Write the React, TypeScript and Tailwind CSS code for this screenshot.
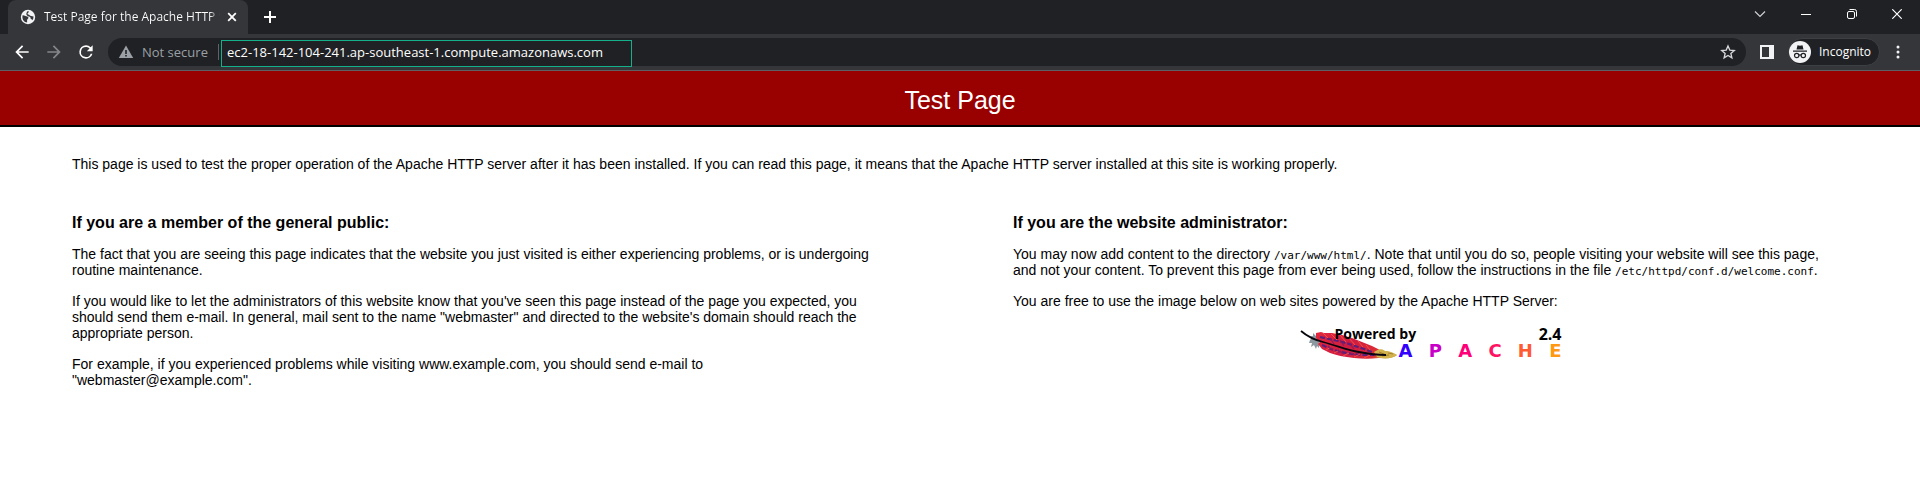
import React from "react";

const chromeFont = "font-['Open_Sans',sans-serif]";

function Globe() {
  return (
    <svg viewBox="0 0 16 16" className="size-4 shrink-0" aria-hidden="true">
      <circle cx="8" cy="8" r="7.2" fill="#f1f3f4" />
      <path d="M2.600 6.200c1.800-.2 2.600.8 3.600 1.100 1.400.3 2.300.7 2.200 1.800-.1.900-1.300 1.100-1.300 2.100v2.300C4.400 13.300 2.400 10.900 2.400 8c0-.6.100-1.200.2-1.800zM8.800 2.400c.2 1.300-1.300 1.300-1.300 2.300 0 1 1.500.6 2.100 1.500.6 1 2.300.9 3.900 1.200.1 1.500-.4 2.900-1.300 3.900-.5-.6-.5-1.400-1.500-1.500-.5-1.100 0-1.700-1-2C8.400 7.500 7 6.900 6.500 5.800 6 4.800 6.800 3.400 7.200 2.500c.5-.1 1.100-.2 1.600-.1z" fill="#35363a" />
    </svg>
  );
}

function Feather() {
  return (
    <svg viewBox="0 0 98 34" className="h-[34px] w-[98px] shrink-0" aria-hidden="true">
      <defs>
        <linearGradient id="plume" x1="0" y1="0" x2="1" y2="0.2">
          <stop offset="0" stopColor="#e0283c" />
          <stop offset="0.5" stopColor="#cf1c42" />
          <stop offset="0.85" stopColor="#dc2c34" />
          <stop offset="1" stopColor="#c9a13b" />
        </linearGradient>
      </defs>
      <path d="M10 14l2-2-2-2 3 0 0-3 3 3 2-3 2 6-1 9-2-2-1 3-2-4-3 2 1-4-3 0z" fill="#8b98a0" />
      <path d="M16 7l5-1 3 1 8 0 10 2 10 3 10 4 10 4 8 4 9 2 8 3c-4 3-9 4-18 3-8 1-16 1-25 0-10-1-18-3-24-5l-8-4-4-5 2-2-4-4z" fill="url(#plume)" />
      <path d="M20 11l9 2 9 2 8 2 9 3 9 3 8 3M22 19l9 4 10 3 11 2 12 1 11 0" fill="none" stroke="#5b1f7c" strokeWidth="2.200" strokeDasharray="5 2" />
      <path d="M23 7l5 5M31 8l6 6M40 9l6 7M49 12l6 7M58 15l5 6M66 19l4 5M26 24l5-3M34 27l6-3M43 30l6-3M54 31l6-3M64 32l6-3" stroke="#f4504a" strokeWidth="1" />
      <path d="M30 12l4 6M40 14l4 6M50 18l4 5M28 20l5 4M38 24l6 4M50 27l6 2" stroke="#8f1b5a" strokeWidth="1.200" />
      <path d="M74 26c4-3 8-4 11-1 5 0 9 2 12 4-5 4-13 4-20 2z" fill="#d2b24c" />
      <path d="M79 26l5 2M82 30l7-1M88 27l5 1" stroke="#94752a" strokeWidth="0.800" />
      <path d="M1 5c7 6 14 9 22 11 15 4 24 8 36 10 10 2 18 3 27 3" fill="none" stroke="#08060c" strokeWidth="1.800" />
    </svg>
  );
}

function ApacheBadge() {
  return (
    <div className="relative mx-auto mt-0.5 flex h-[34px] w-[262px] font-['Open_Sans',sans-serif] text-black">
      <Feather />
      <div className="flex grow items-end justify-between pl-px font-['DejaVu_Sans',sans-serif] text-[18px] leading-[18px] font-bold">
        <span className="text-[#3300ff]">A</span>
        <span className="text-[#c800c8]">P</span>
        <span className="text-[#ff0078]">A</span>
        <span className="text-[#ff1464]">C</span>
        <span className="text-[#ff5a32]">H</span>
        <span className="text-[#ff9914]">E</span>
      </div>
      <div className="absolute inset-x-0 top-0 flex justify-between pl-[35px] text-[14px] leading-4 font-bold">
        <span>Powered by</span>
        <span className="text-[16px]">2.4</span>
      </div>
    </div>
  );
}

function TabStrip() {
  return (
    <div className="flex h-[34px] items-stretch bg-[#202124] pl-2 text-white">
      <div className="flex w-60 items-center rounded-t-lg bg-[#35363a] pr-2 pl-3">
        <Globe />
        <span className="ml-2 w-[176px] overflow-hidden bg-linear-to-r from-white from-94% to-transparent bg-clip-text text-[12px] whitespace-nowrap text-transparent">
          Test Page for the Apache HTTP Server
        </span>
        <button aria-label="Close tab" className="ml-1 flex size-4 items-center justify-center">
          <svg viewBox="0 0 16 16" className="size-4" stroke="#fff" strokeWidth="1.800" aria-hidden="true">
            <path d="M4.200 4.200l7.600 7.600M11.800 4.200l-7.600 7.600" />
          </svg>
        </button>
      </div>
      <button aria-label="New tab" className="ml-3 flex w-5 items-center justify-center">
        <svg viewBox="0 0 14 14" className="size-3.5" stroke="#fff" strokeWidth="2" aria-hidden="true">
          <path d="M7 1v12M1 7h12" />
        </svg>
      </button>
      <div className="ml-auto flex h-7 w-46">
        <button aria-label="Search tabs" className="flex grow items-center justify-center">
          <svg viewBox="0 0 12 12" className="size-3" fill="none" stroke="#d0d0d2" strokeWidth="1.200" aria-hidden="true">
            <path d="M1 3.500l5 5 5-5" />
          </svg>
        </button>
        <button aria-label="Minimize" className="flex grow items-center justify-center">
          <svg viewBox="0 0 10 10" className="size-2.5" stroke="#fff" aria-hidden="true">
            <path d="M0 5.500h10" />
          </svg>
        </button>
        <button aria-label="Restore" className="flex grow items-center justify-center">
          <svg viewBox="0 0 10 10" className="size-2.5" fill="none" stroke="#fff" aria-hidden="true">
            <rect x=".5" y="2.500" width="7" height="7" rx="1.500" />
            <path d="M2.500.5h5a2 2 0 0 1 2 2v5" />
          </svg>
        </button>
        <button aria-label="Close window" className="flex grow items-center justify-center">
          <svg viewBox="0 0 10 10" className="size-2.5" stroke="#fff" strokeWidth="1.200" aria-hidden="true">
            <path d="M.3.3l9.400 9.400M9.700.3L.3 9.700" />
          </svg>
        </button>
      </div>
    </div>
  );
}

function Toolbar() {
  return (
    <div className="flex h-[37px] items-center border-b border-[#5f6063] bg-[#35363a] pl-3 text-white">
      <button aria-label="Back" className="flex size-5 items-center justify-center">
        <svg viewBox="0 0 24 24" className="size-5" fill="#fff" aria-hidden="true">
          <path d="M20 11H7.830l5.590-5.590L12 4l-8 8 8 8 1.410-1.410L7.830 13H20v-2z" />
        </svg>
      </button>
      <button aria-label="Forward" className="ml-3 flex size-5 items-center justify-center">
        <svg viewBox="0 0 24 24" className="size-5" fill="#85868a" aria-hidden="true">
          <path d="M12 4l-1.410 1.410L16.170 11H4v2h12.170l-5.580 5.590L12 20l8-8z" />
        </svg>
      </button>
      <button aria-label="Reload" className="ml-3 flex size-5 items-center justify-center">
        <svg viewBox="0 0 24 24" className="size-5" fill="#fff" aria-hidden="true">
          <path d="M17.650 6.350A7.960 7.960 0 0 0 12 4a8 8 0 1 0 7.730 10h-2.080A6 6 0 1 1 12 6c1.660 0 3.140.69 4.220 1.780L13 11h7V4l-2.350 2.350z" />
        </svg>
      </button>
      <div className="ml-3 flex h-7 grow items-center rounded-full bg-[#202124] px-2.5">
        <svg viewBox="0 0 16 16" className="size-4 shrink-0" aria-hidden="true">
          <path d="M8 1.500L15.200 14H.8z" fill="#9aa0a6" />
          <path d="M7.200 6h1.600v4H7.200zM7.200 11h1.600v1.600H7.200z" fill="#202124" />
        </svg>
        <label htmlFor="address" className="ml-2 w-[68px] shrink-0 text-[13px] whitespace-nowrap text-[#9aa0a6]">
          Not secure
        </label>
        <span className="ml-2 h-4 w-px bg-[#5f6368]" />
        <div className="relative ml-2 grow">
          <input
            id="address"
            type="text"
            defaultValue="ec2-18-142-104-241.ap-southeast-1.compute.amazonaws.com"
            className="block h-7 w-full bg-transparent text-[13px] font-medium text-white outline-none"
          />
          <span className="pointer-events-none absolute top-0.5 -left-1.5 h-[27px] w-[411px] border border-[#14b08c]" />
        </div>
        <button aria-label="Bookmark this page" className="flex size-4 items-center justify-center">
          <svg viewBox="0 0 24 24" className="size-4" fill="none" stroke="#d5d7da" strokeWidth="2" aria-hidden="true">
            <path d="M12 3l2.700 6.200 6.700.6-5.100 4.400 1.500 6.600L12 17.300l-5.800 3.500 1.500-6.600-5.100-4.400 6.700-.6z" />
          </svg>
        </button>
      </div>
      <button aria-label="Side panel" className="ml-3.5 flex w-3.5 items-center justify-center">
        <svg viewBox="0 0 14 14" className="size-3.5" aria-hidden="true">
          <path d="M0 0h14v14H0zM2 2v10h7V2z" fill="#f1f3f4" fillRule="evenodd" />
        </svg>
      </button>
      <button className="ml-3.5 flex h-7 w-[92px] items-center gap-2 rounded-full border border-[#3c4043] bg-[#202124] text-[12px]">
        <svg viewBox="0 0 22 22" className="size-[22px]" aria-hidden="true">
          <circle cx="11" cy="11" r="11" fill="#f1f3f4" />
          <path d="M7.500 8.500l1-4.200 2.500.5 2.500-.5 1 4.200zM4 9.600h14v1.200H4z" fill="#202124" />
          <g fill="none" stroke="#202124" strokeWidth="1.200">
            <circle cx="7.700" cy="14.500" r="2.200" />
            <circle cx="14.300" cy="14.500" r="2.200" />
            <path d="M9.900 14.200q1.100-.7 2.200 0" />
          </g>
        </svg>
        Incognito
      </button>
      <button aria-label="Menu" className="mr-3.5 ml-2.5 flex w-4 items-center justify-center">
        <svg viewBox="0 0 4 14" className="h-3.5 w-1" fill="#f1f3f4" aria-hidden="true">
          <circle cx="2" cy="2" r="1.500" />
          <circle cx="2" cy="7" r="1.500" />
          <circle cx="2" cy="12" r="1.500" />
        </svg>
      </button>
    </div>
  );
}

export default function App() {
  return (
    <div className="min-h-screen bg-white font-['Liberation_Sans',Arial,sans-serif] text-[14px] leading-4 text-black">
      <header className={chromeFont}>
        <TabStrip />
        <Toolbar />
      </header>
      <h1 className="border-b-2 border-black bg-[#990000] pt-3.5 pb-2.5 text-center text-[25px] leading-[30px] text-white">
        Test Page
      </h1>
      <main className="px-[72px] pt-[29px]">
        <p>
          This page is used to test the proper operation of the Apache HTTP server after it has been installed. If you
          can read this page, it means that the Apache HTTP server installed at this site is working properly.
        </p>
        <div className="mt-[43px] grid grid-cols-2 gap-[106px]">
          <section className="flex flex-col gap-[15px] pr-7">
            <h2 className="text-[16px] leading-4 font-bold">If you are a member of the general public:</h2>
            <p>
              The fact that you are seeing this page indicates that the website you just visited is either experiencing
              problems, or is undergoing routine maintenance.
            </p>
            <p>
              If you would like to let the administrators of this website know that you've seen this page instead of the
              page you expected, you should send them e-mail. In general, mail sent to the name "webmaster" and directed
              to the website's domain should reach the appropriate person.
            </p>
            <p>
              For example, if you experienced problems while visiting www.example.com, you should send e-mail to
              "webmaster@example.com".
            </p>
          </section>
          <section className="flex flex-col gap-[15px]">
            <h2 className="text-[16px] leading-4 font-bold">If you are the website administrator:</h2>
            <p className="pr-4">
              You may now add content to the directory{" "}
              <code className="font-['DejaVu_Sans_Mono',monospace] text-[11px] leading-none">/var/www/html/</code>. Note
              that until you do so, people visiting your website will see this page, and not your content. To prevent
              this page from ever being used, follow the instructions in the file{" "}
              <code className="font-['DejaVu_Sans_Mono',monospace] text-[11px] leading-none">/etc/httpd/conf.d/welcome.conf</code>.
            </p>
            <p>You are free to use the image below on web sites powered by the Apache HTTP Server:</p>
            <ApacheBadge />
          </section>
        </div>
      </main>
    </div>
  );
}
